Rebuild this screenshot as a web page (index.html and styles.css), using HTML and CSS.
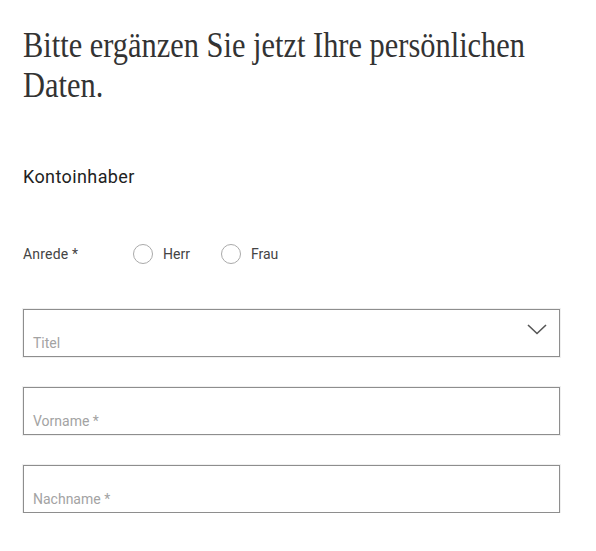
FILE: index.html
```html
<!DOCTYPE html>
<html lang="de">
<head>
	<meta charset="UTF-8">
	<title>Persönliche Daten</title>
	<link rel="stylesheet" href="styles.css">
</head>
<body>
	<div class="page">
		<h1 class="headline"><span>Bitte ergänzen Sie jetzt Ihre persönlichen Daten.</span></h1>

		<h2 class="section">Kontoinhaber</h2>

		<div class="salutation">
			<span class="salutation-label">Anrede *</span>
			<label class="radio"><span class="radio-dot"></span>Herr</label>
			<label class="radio"><span class="radio-dot"></span>Frau</label>
		</div>

		<div class="field field-select">
			<span class="placeholder">Titel</span>
			<svg class="chevron" width="20" height="11" viewBox="0 0 20 11">
				<path d="M1 1 L10 9.5 L19 1" fill="none" stroke="#555" stroke-width="1.6"/>
			</svg>
		</div>

		<div class="field">
			<span class="placeholder">Vorname *</span>
		</div>

		<div class="field">
			<span class="placeholder">Nachname *</span>
		</div>
	</div>
</body>
</html>
```

FILE: styles.css
```css
body {
	margin: 0;
	background: #fff;
	font-family: Roboto, "Liberation Sans", sans-serif;
	color: #333;
}

.page {
	width: 537px;
	padding: 25px 0 0 23px;
}

.headline {
	margin: 0;
	font-family: "Liberation Serif", serif;
	font-weight: normal;
	font-size: 36px;
	line-height: 40px;
	color: #333;
	width: calc(537px / 0.845);
	transform: scaleX(0.845);
	transform-origin: left top;
}

.section {
	margin: 60px 0 0;
	font-size: 18px;
	font-weight: normal;
	line-height: 24px;
	letter-spacing: 0.4px;
	color: #222;
}

.salutation {
	display: flex;
	align-items: center;
	height: 20px;
	margin-top: 55px;
	font-size: 14px;
	color: #444;
}

.salutation-label { width: 110px; letter-spacing: 0.2px;}

.radio {
	display: flex;
	align-items: center;
	margin-right: 31px;
}

.radio-dot {
	width: 18px;
	height: 18px;
	border: 1px solid #aaa;
	border-radius: 50%;
	margin-right: 10px;
}

.field {
	display: flex;
	align-items: flex-end;
	justify-content: space-between;
	box-sizing: border-box;
	height: 48px;
	margin-top: 30px;
	padding: 0 12px 5px 9px;
	border: 1px solid #8e8e8e;
	box-shadow: 0 0 0 1px #f0f0f0;
}

.field-select { margin-top: 45px;}

.placeholder {
	font-size: 14px;
	line-height: 16px;
	color: #a3a3a3;
}

.chevron {
	align-self: center;
	margin-bottom: 3px;
}
```
